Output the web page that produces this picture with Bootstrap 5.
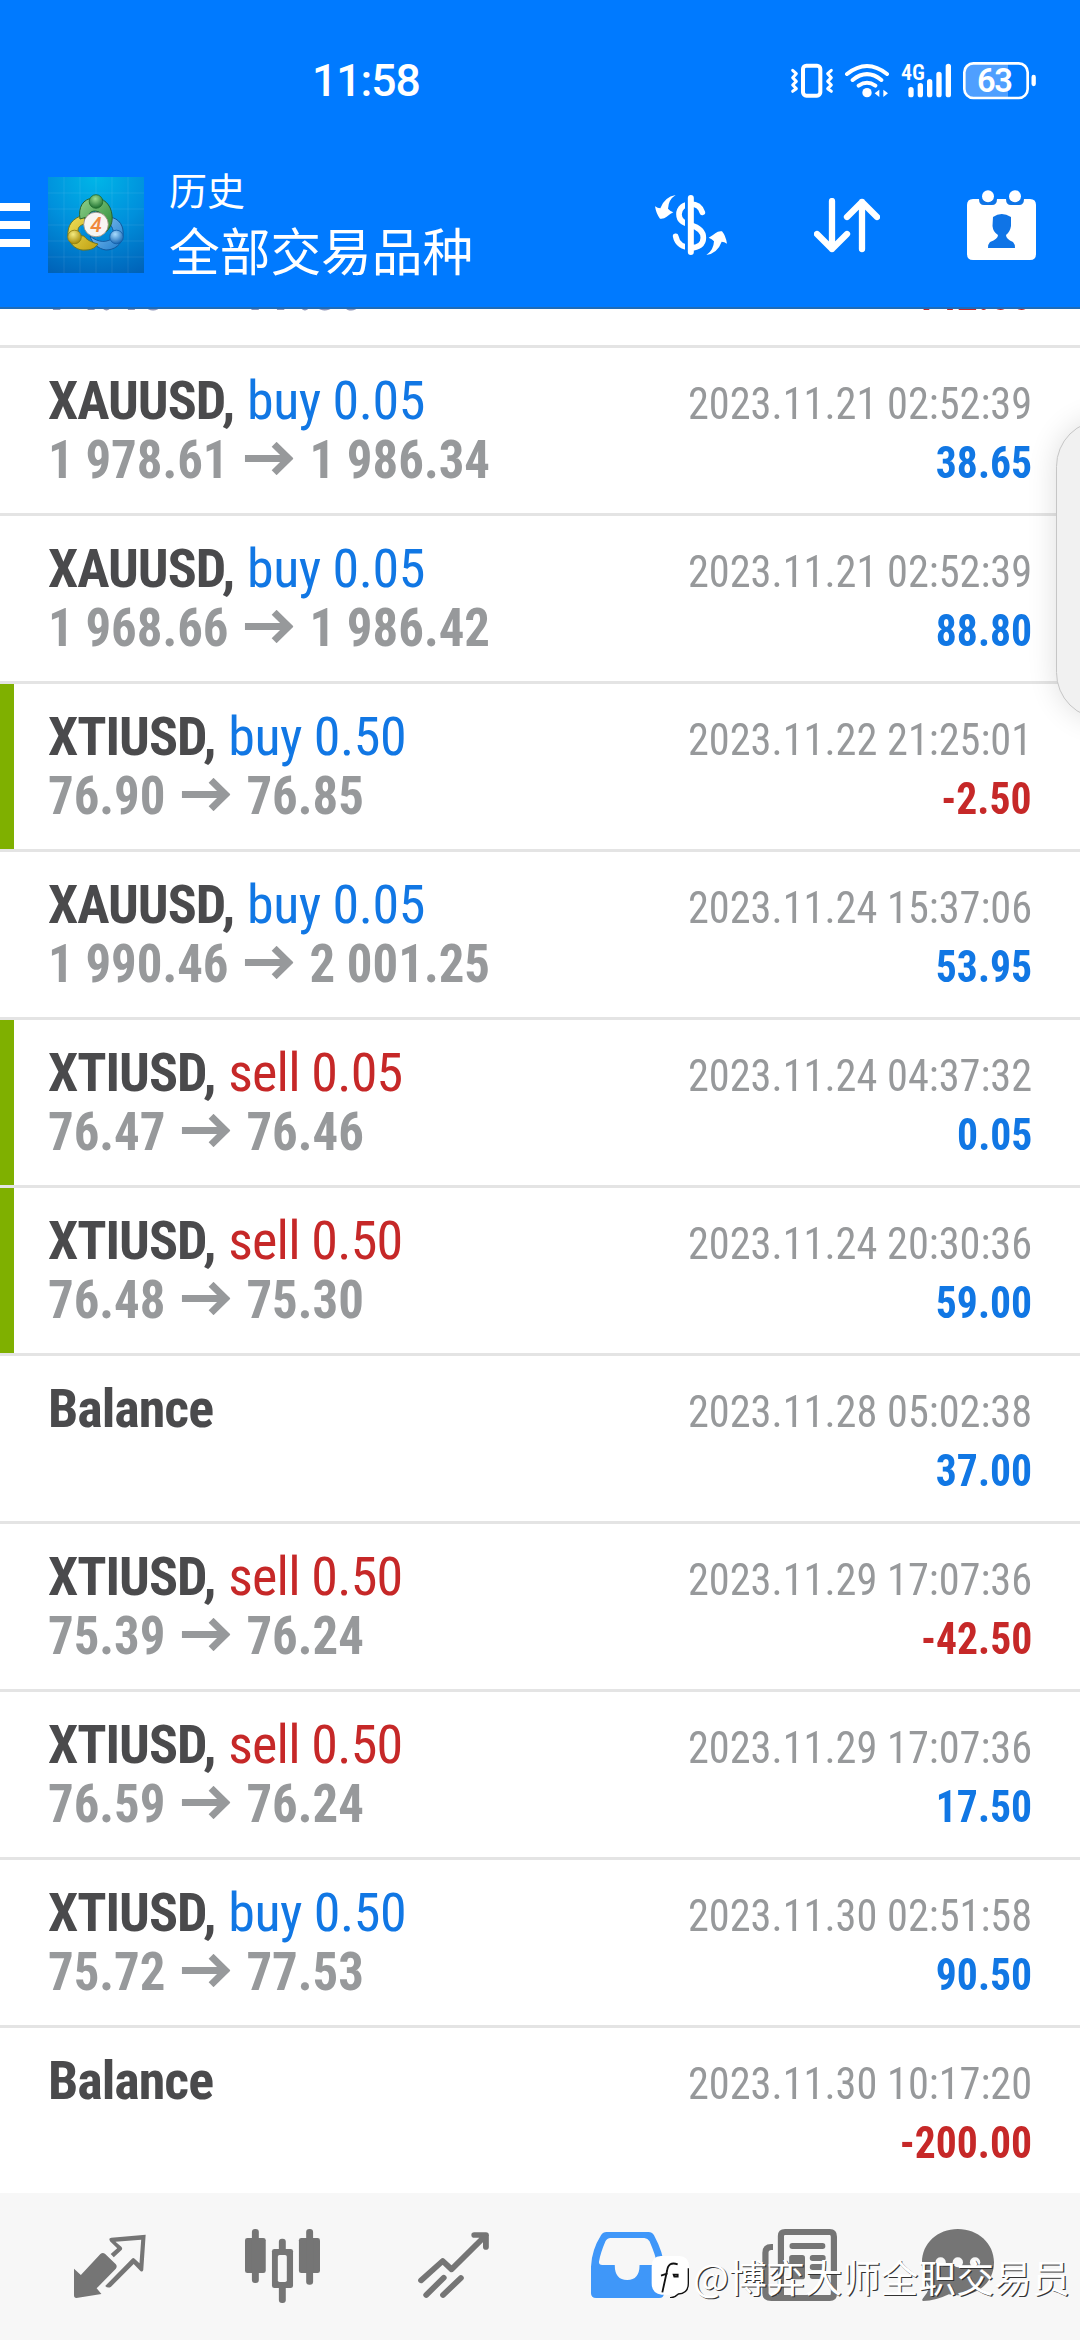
<!DOCTYPE html>
<html lang="zh-CN">
<head>
<meta charset="utf-8">
<meta name="viewport" content="width=device-width, initial-scale=1">
<title>历史</title>
<link href="https://cdn.jsdelivr.net/npm/bootstrap@5.3.0/dist/css/bootstrap.min.css" rel="stylesheet">
<style>
body{width:1080px;height:2340px;overflow:hidden;font-family:"Roboto Condensed",Roboto,"Noto Sans CJK SC",sans-serif;background:#fff}
svg{display:block;flex:none}
.top{background:#007aff;color:#fff;height:309px;border-bottom:2px solid #1f6cb8;font-family:Roboto,"Noto Sans CJK SC",sans-serif}
.status{height:141px;padding:0 43px 0 312px}
.clock{font-size:44.5px;font-weight:500;line-height:60px;margin-top:51px;letter-spacing:-1px}
.sys{margin-top:60px}
.appbar{height:168px}
.names{margin-left:25px;width:486px;padding-top:11px}
.sub{font-size:38px;line-height:46px}
.ttl{font-size:50.7px;line-height:77px}
.deal{height:168px;border-top:3px solid #e4e4e4;padding:24px 48px 0;flex:none;position:relative}
.deal.tagged::before{content:"";position:absolute;left:0;top:0;bottom:0;width:14px;background:#7fb000}
.ln{height:59px;line-height:58px;white-space:pre}
.sym{font-size:54px;font-weight:700;color:#4a4a4c;letter-spacing:-1px}
.act{font-size:54px;letter-spacing:-.5px;margin-left:9px}
.act.dn{letter-spacing:-.8px}
.prc{display:inline-block;font-size:54px;font-weight:700;color:#97999b;transform:scaleX(.941);transform-origin:0 50%}
.prc:empty::before{content:"\200b"}
.prc svg{display:inline-block;margin:0 17px 3px 17px;vertical-align:baseline}
.when,.amt{display:inline-block;font-size:45px;transform-origin:100% 50%}
.when{color:#97999b;transform:scaleX(.94)}
.amt{font-weight:700;transform:scaleX(.925)}
.up{color:#1177e4}.dn{color:#c62828}
.passing .prc{color:#8d94b8}
.tabs{height:147px;background:#f7f7f7;padding:0 86px 0 74px;color:#757575}
.tabs svg{margin-right:98.5px}
.edge{position:absolute;right:0;top:370px}
.wm{position:absolute;left:651px;top:2248px;height:56px}
.wmtxt{font:400 37.9px/56px "Noto Sans CJK SC",sans-serif;color:#fff;text-shadow:1.2px 1.2px 0 #333;margin-left:4px;white-space:nowrap}
</style>
<script src="https://cdn.jsdelivr.net/npm/bootstrap@5.3.0/dist/js/bootstrap.bundle.min.js"></script>
</head>
<body class="position-relative d-flex flex-column">
<svg width="0" height="0" class="position-absolute"><defs><symbol id="ar" viewBox="0 0 49 33" preserveAspectRatio="none"><path d="M0 16.5H44M29.500 2.300L44 16.500L29.500 30.700" fill="none" stroke="currentColor" stroke-width="7"/></symbol></defs></svg>
<header class="top flex-shrink-0">
  <div class="status d-flex justify-content-between align-items-start">
    <div class="clock">11:58</div>
    <svg class="sys" width="247" height="40" viewBox="150 60 741 120" fill="none" stroke="#fff" stroke-width="11" stroke-linecap="round" stroke-linejoin="round">
      <rect x="189" y="77" width="52" height="90" rx="10" stroke-width="12"/>
      <path d="M158 91L169 101L158 113L169 124L158 135L169 146L158 154M274 91L263 101L274 113L263 124L274 135L263 146L274 154" stroke-width="9"/>
      <path d="M321 102Q381 54 441 102M338 120Q381 85 424 120M356 137Q381 120 406 137" stroke-width="12"/>
      <circle cx="381" cy="158" r="14" fill="#fff" stroke="none"/>
      <path d="M404 160L418 149V171ZM444 160L430 149V171Z" fill="#fff" stroke="none"/>
      <path d="M513 149V164M541 137V164M569 125V164M597 103V164M625 79V164" stroke-width="16"/>
      <text x="483" y="120" font-family="Roboto Condensed, Roboto, sans-serif" font-weight="600" font-size="66" fill="#fff" stroke="none">4G</text>
      <path d="M700 72H804V172H700Q676 168 676 146V96Q676 74 700 72Z" fill="#4f9fff" stroke="none"/>
      <rect x="673" y="70" width="190" height="104" rx="27" stroke-width="8"/>
      <path d="M881 111V132" stroke-width="13"/>
      <text x="763" y="156" text-anchor="middle" font-family="Roboto, sans-serif" font-weight="600" font-size="98" letter-spacing="-4" fill="#fff" stroke="none">63</text>
    </svg>
  </div>
  <div class="appbar d-flex align-items-center">
    <svg width="30" height="44" viewBox="0 0 30 44" fill="#fff"><path d="M0 0H30V8H0ZM0 18H30V26H0ZM0 36H30V44H0Z"/></svg>
    <svg width="96" height="96" viewBox="0 0 96 96" style="margin-left:18px">
      <defs>
        <radialGradient id="bg" cx=".5" cy="0" r="1.1"><stop offset="0" stop-color="#00b6e8"/><stop offset=".5" stop-color="#0090dc"/><stop offset="1" stop-color="#0062b8"/></radialGradient>
        <linearGradient id="gg" x1="0" y1="0" x2="1" y2="1"><stop offset="0" stop-color="#8fd08c"/><stop offset="1" stop-color="#2c8a35"/></linearGradient>
        <linearGradient id="gy" x1="0" y1="0" x2="1" y2="1"><stop offset="0" stop-color="#f0e05a"/><stop offset="1" stop-color="#c0a010"/></linearGradient>
        <linearGradient id="gb" x1="0" y1="0" x2="1" y2="1"><stop offset="0" stop-color="#8cc8f4"/><stop offset="1" stop-color="#1f7ccc"/></linearGradient>
        <radialGradient id="hg" cx=".45" cy=".3" r=".7"><stop offset="0" stop-color="#9cdc90"/><stop offset="1" stop-color="#1d7030"/></radialGradient>
        <radialGradient id="hy" cx=".4" cy=".3" r=".7"><stop offset="0" stop-color="#f4ea80"/><stop offset="1" stop-color="#a88c08"/></radialGradient>
        <radialGradient id="hb" cx=".4" cy=".3" r=".7"><stop offset="0" stop-color="#a8dcff"/><stop offset="1" stop-color="#1868b4"/></radialGradient>
      </defs>
      <rect width="96" height="96" fill="url(#bg)"/>
      <path d="M16 0V96M32 0V96M48 0V96M64 0V96M80 0V96M0 16H96M0 32H96M0 48H96M0 64H96M0 80H96" stroke="#fff" stroke-opacity=".1" stroke-width=".8"/>
      <path d="M61 40C72 41 76 50 75 58C74 68 66 73 58 73C50 72 44 66 42 59C50 66 60 66 66 60C66 54 64 48 60 46Z" fill="url(#gb)" stroke="#12589c"/>
      <path d="M36 38C24 41 19 49 20 59C22 69 30 74 38 73C44 73 48 70 50 67C42 65 38 62 36 59C32 59 30 57 30 54C30 50 32 48 37 47Z" fill="url(#gy)" stroke="#6c7420"/>
      <path d="M32 42C30 30 35 22 45 21C56 20 63 28 64 38C65 46 62 51 58 55C58 46 56 38 51 35C46 33 42 34 39 40Z" fill="url(#gg)" stroke="#28622c"/>
      <circle cx="48" cy="24.500" r="6.800" fill="url(#hg)" stroke="#1f6a2c" stroke-width=".8"/>
      <circle cx="26.500" cy="60" r="6.800" fill="url(#hy)" stroke="#8a7a10" stroke-width=".8"/>
      <circle cx="68.500" cy="60" r="6.800" fill="url(#hb)" stroke="#125ca4" stroke-width=".8"/>
      <circle cx="48" cy="47.500" r="12.300" fill="#f8f5f2" stroke="#9a8a78" stroke-width=".8"/>
      <text x="48" y="55" text-anchor="middle" font-family="Roboto, sans-serif" font-style="italic" font-weight="500" font-size="21" fill="#f0883c">4</text>
    </svg>
    <div class="names"><div class="sub">历史</div><div class="ttl">全部交易品种</div></div>
    <svg width="72" height="60" viewBox="42 30 216 180" style="margin-right:87px">
      <path d="M184 82C178 64 164 57 150 57C128 57 114 70 114 88C114 108 128 113 148 120C172 127 187 138 187 158C187 178 172 188 150 188C126 188 108 176 104 154" fill="none" stroke="#fff" stroke-width="17" stroke-linecap="round"/>
      <path d="M136.500 30V210" stroke="#007aff" stroke-width="9"/>
      <path d="M149.500 39V201" stroke="#fff" stroke-width="18" stroke-linecap="round"/>
      <path id="cv" d="M104 30Q82 44 81 71Q87 78 97 82Q85 88 77 95Q68 103 57 101Q46 88 42 64Q50 70 58 70Q70 36 104 30Z" fill="#fff"/>
      <use href="#cv" transform="rotate(180 150 120)"/>
    </svg>
    <svg width="66" height="55" viewBox="0 0 66 55" fill="none" stroke="#fff" stroke-width="6.300" stroke-linecap="round" stroke-linejoin="round" style="margin-right:87px"><path d="M18 3V51M3 36L18 51L33 36M48 51V4M33 19L48 4L63 19"/></svg>
    <svg width="69" height="70" viewBox="0 0 69 70"><path d="M6 9H63Q69 9 69 15V64Q69 70 63 70H6Q0 70 0 64V15Q0 9 6 9Z" fill="#fff"/><path d="M12 9Q12 15 17 15H25Q30 15 30 9ZM39 9Q39 15 44 15H52Q57 15 57 9Z" fill="#0f74e6"/><circle cx="21" cy="6.200" r="6" fill="#fff"/><circle cx="48" cy="6.200" r="6" fill="#fff"/><path d="M26 27Q34.500 21 44 27V36Q43 42 39 45Q39 49 46 52Q48 54 48 58H21Q21 54 23 52Q31 49 31 45Q26 42 25.500 36Z" fill="#0f74e6"/></svg>
  </div>
</header>
<main id="deals" class="flex-grow-1 overflow-hidden d-flex flex-column justify-content-end"></main>
<nav class="tabs d-flex align-items-center flex-shrink-0">
  <svg width="72" height="75" viewBox="215 177 210 225" preserveAspectRatio="none" fill="currentColor"><path d="M215 296L235 315L292 252Q299 246 306 252L337 283Q342 289 337 296L281 355L295 372L222 384Q215 384 215 376ZM318 208Q318 204 324 203L424 194L417 300Q414 308 408 302L389 282L323 350Q314 356 306 348L384 266Q388 262 392 266L406 280L411 209L336 215L353 230Q358 236 353 241L331 262L322 252L341 235L320 214Z"/></svg>
  <svg width="75" height="75" viewBox="709 177 217 225" preserveAspectRatio="none"><g fill="currentColor"><rect x="709" y="204" width="60" height="105" rx="7"/><rect x="865" y="204" width="61" height="105" rx="7"/><rect x="729" y="177" width="20" height="162" rx="9"/><rect x="886" y="177" width="20" height="167" rx="9"/><rect x="807" y="206" width="20" height="50" rx="9"/><rect x="807" y="340" width="20" height="59" rx="9"/><rect x="787" y="237" width="61" height="117" rx="7"/></g><rect x="804" y="255" width="26" height="81" rx="5" fill="#f7f7f7"/></svg>
  <svg width="71" height="75" viewBox="1213 177 207 225" preserveAspectRatio="none" fill="none" stroke="currentColor" stroke-width="17" stroke-linecap="round" stroke-linejoin="round" style="margin-right:101.500px"><path d="M1222 331L1285 273L1311 298L1411 196M1377 195H1411V231"/><path d="M1237 375L1288 323M1286 375L1338 324"/></svg>
  <svg width="73" height="75" viewBox="145 177 212 225" preserveAspectRatio="none"><path d="M190 186H312Q322 186 328 196Q356 250 357 290V370Q357 384 343 384H160Q145 384 145 370V290Q147 240 174 196Q180 186 190 186Z" fill="#3f97f9"/><path d="M202 204H300Q310 205 315 214Q334 260 335 276Q335 285 326 285H286Q286 330 250 330Q214 330 214 285H178Q168 285 168 276Q172 250 187 214Q191 205 202 204Z" fill="#f7f7f7"/></svg>
  <svg width="75" height="75" viewBox="645 177 218 225" preserveAspectRatio="none" style="margin-right:85px"><path fill="none" stroke="currentColor" stroke-width="18" d="M677 231H672Q655 231 655 248V370Q655 384 672 384H842Q854 384 854 372V200Q854 186 842 186H712Q700 186 700 198V384"/><g fill="currentColor"><rect x="725" y="219" width="104" height="18" rx="8"/><rect x="724" y="255" width="46" height="73" rx="8"/><rect x="784" y="255" width="46" height="18" rx="8"/><rect x="784" y="282" width="46" height="18" rx="8"/><rect x="784" y="309" width="46" height="18" rx="8"/></g></svg>
  <svg width="72" height="75" viewBox="1109 177 209 225" preserveAspectRatio="none" style="margin-right:0"><path fill="currentColor" d="M1213 177C1272 177 1318 220 1318 277C1318 336 1274 376 1213 376Q1200 376 1187 373Q1150 392 1112 393Q1107 391 1112 385Q1125 368 1132 350C1118 333 1109 308 1109 277C1109 220 1154 177 1213 177Z"/><g fill="#f7f7f7"><circle cx="1163" cy="277" r="15"/><circle cx="1213" cy="277" r="15"/><circle cx="1263" cy="277" r="15"/></g></svg>
</nav>
<svg class="edge" width="72" height="400" viewBox="0 0 72 400"><defs><filter id="bl" x="-60%" y="-30%" width="220%" height="160%"><feGaussianBlur stdDeviation="15"/></filter></defs><rect x="48" y="50" width="96" height="299" rx="48" fill="#000" opacity=".13" filter="url(#bl)"/><rect x="48.500" y="50.500" width="96" height="298" rx="46" fill="#f1f1f1" stroke="#c6c6c6"/></svg>
<div class="wm d-flex align-items-center">
  <svg width="38" height="44" viewBox="30 57 114 132"><path d="M60 63H114Q144 63 144 95V145Q144 178 115 179Q100 190 87 190Q93 184 93 179H62Q32 176 32 145V95Q32 63 60 63Z" fill="#fff"/><path d="M110 88Q82 78 78 108L64 172M60 122L80 115M98 119H110V125H100Z" fill="none" stroke="#111" stroke-width="5.500"/><path d="M142 100V145Q142 176 112 177Q100 189 87 188" fill="none" stroke="#111" stroke-width="4"/></svg>
  <span class="wmtxt">@博弈大师全职交易员</span>
</div>
<script>
// [symbol, action, volume, open, close, time, profit, has side tag]
const deals = [
  ['', '', '', '74.46', '77.30', '', '-142.00', 0],
  ['XAUUSD', 'buy', '0.05', '1 978.61', '1 986.34', '2023.11.21 02:52:39', '38.65', 0],
  ['XAUUSD', 'buy', '0.05', '1 968.66', '1 986.42', '2023.11.21 02:52:39', '88.80', 0],
  ['XTIUSD', 'buy', '0.50', '76.90', '76.85', '2023.11.22 21:25:01', '-2.50', 1],
  ['XAUUSD', 'buy', '0.05', '1 990.46', '2 001.25', '2023.11.24 15:37:06', '53.95', 0],
  ['XTIUSD', 'sell', '0.05', '76.47', '76.46', '2023.11.24 04:37:32', '0.05', 1],
  ['XTIUSD', 'sell', '0.50', '76.48', '75.30', '2023.11.24 20:30:36', '59.00', 1],
  ['Balance', '', '', '', '', '2023.11.28 05:02:38', '37.00', 0],
  ['XTIUSD', 'sell', '0.50', '75.39', '76.24', '2023.11.29 17:07:36', '-42.50', 0],
  ['XTIUSD', 'sell', '0.50', '76.59', '76.24', '2023.11.29 17:07:36', '17.50', 0],
  ['XTIUSD', 'buy', '0.50', '75.72', '77.53', '2023.11.30 02:51:58', '90.50', 0],
  ['Balance', '', '', '', '', '2023.11.30 10:17:20', '-200.00', 0]
];
const line = 'ln d-flex justify-content-between align-items-baseline';
const arrow = '<svg width="52" height="33"><use href="#ar"/></svg>';
document.getElementById('deals').innerHTML = deals.map(([s, a, v, o, c, t, p, tag]) => {
  const head = s ? `<span><span class="sym">${s}${a ? ',' : ''}</span>${a ? ` <span class="act ${a === 'buy' ? 'up' : 'dn'}">${a} ${v}</span>` : ''}</span><span class="when">${t}</span>` : '';
  return `<div class="deal${tag ? ' tagged' : ''}${s ? '' : ' passing'}"><div class="${line}">${head}</div><div class="${line}"><span class="prc">${o ? o + arrow + c : ''}</span><span class="amt ${p[0] === '-' ? 'dn' : 'up'}">${p}</span></div></div>`;
}).join('');
</script>
</body>
</html>
